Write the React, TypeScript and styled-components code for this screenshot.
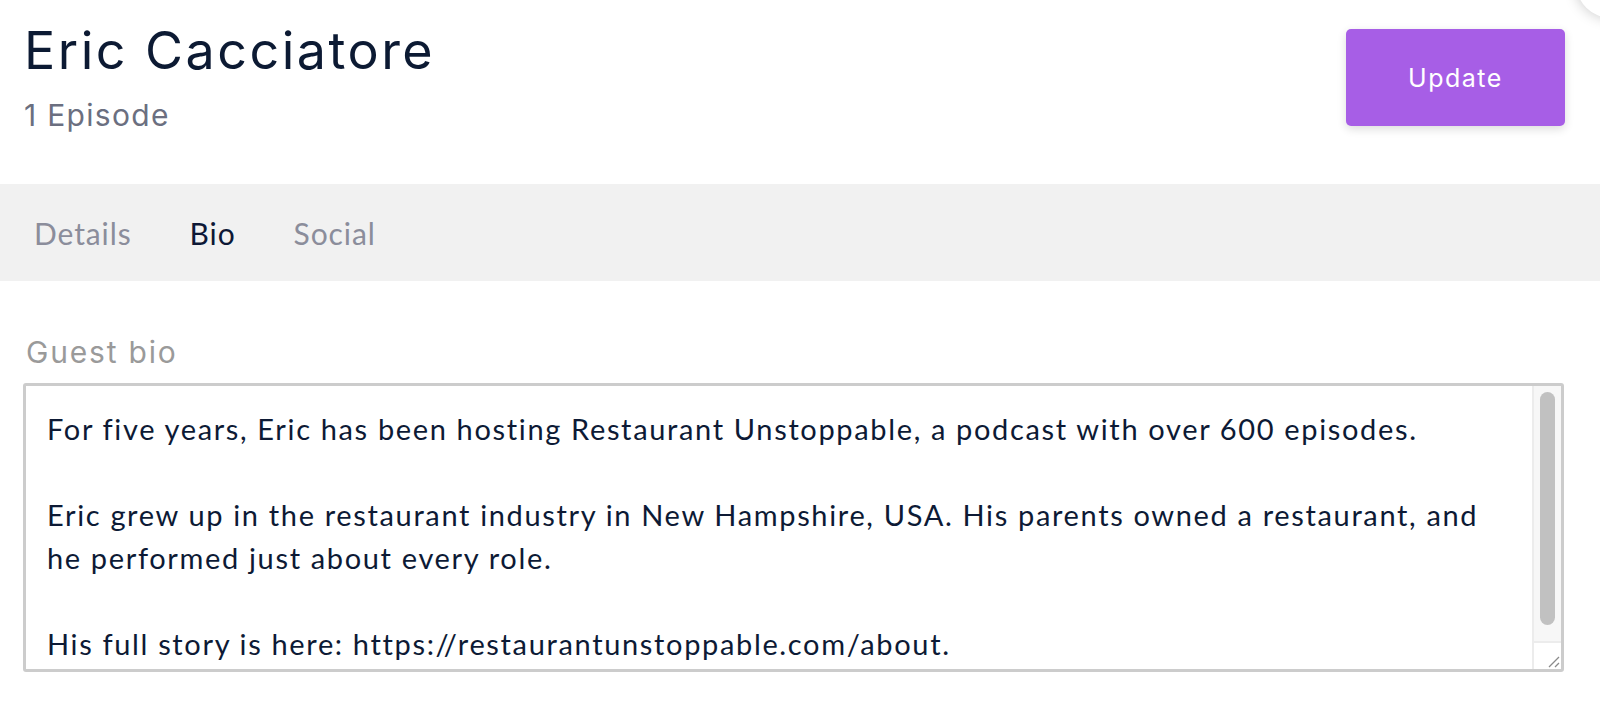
import React, { useState } from 'react';
import styled, { createGlobalStyle } from 'styled-components';

const GlobalStyle = createGlobalStyle`
  html, body {
    margin: 0;
    padding: 0;
    background: #ffffff;
  }
  body {
    font-family: Lato, 'Noto Sans', sans-serif;
    color: #0d1a35;
    overflow: hidden;
  }
  * {
    box-sizing: border-box;
  }
`;

const tabs = ['Details', 'Bio', 'Social'];

const bio = `For five years, Eric has been hosting Restaurant Unstoppable, a podcast with over 600 episodes.

Eric grew up in the restaurant industry in New Hampshire, USA. His parents owned a restaurant, and he performed just about every role.

His full story is here: https://restaurantunstoppable.com/about.`;

export default function App() {
  const [active, setActive] = useState('Bio');
  const [text, setText] = useState(bio);

  return (
    <>
      <GlobalStyle />
      <Page>
        <CornerShadow />
        <Header>
          <div>
            <Title>Eric Cacciatore</Title>
            <Count>1 Episode</Count>
          </div>
          <UpdateButton type='button'>Update</UpdateButton>
        </Header>
        <TabBar>
          {tabs.map((t) => (
            <Tab key={t} $active={t === active} onClick={() => setActive(t)}>
              {t}
            </Tab>
          ))}
        </TabBar>
        <Body>
          <Label htmlFor='guest-bio'>Guest bio</Label>
          <BioBox>
            <BioInput id='guest-bio' value={text} onChange={(e) => setText(e.target.value)} />
            <ScrollRail>
              <ScrollTrack>
                <ScrollThumb />
              </ScrollTrack>
              <Resizer>
                <svg width='14' height='14' viewBox='0 0 14 14'>
                  <path d='M13 3 L3 13 M13 9 L9 13' stroke='#8a8a8a' strokeWidth='1.3' fill='none' />
                </svg>
              </Resizer>
            </ScrollRail>
          </BioBox>
        </Body>
      </Page>
    </>
  );
}

const Page = styled.div`
  position: relative;
  width: 1600px;
  height: 703px;
  overflow: hidden;
  background: #ffffff;
`;

// shadow of an element sitting just outside the top-right corner
const CornerShadow = styled.div`
  position: absolute;
  top: -52px;
  right: -46px;
  width: 70px;
  height: 70px;
  border-radius: 50%;
  background: #ffffff;
  box-shadow: 0 0 14px rgba(0, 0, 0, 0.22);
`;

const Header = styled.header`
  display: flex;
  justify-content: space-between;
  align-items: flex-start;
  height: 184px;
  padding: 21px 35px 0 24px;
`;

const Title = styled.h1`
  margin: 0;
  font-family: Inter, 'Noto Sans', sans-serif;
  font-weight: 400;
  font-size: 52px;
  line-height: 60px;
  letter-spacing: 2.5px;
  color: #0c1a33;
`;

const Count = styled.div`
  margin-top: 16px;
  font-family: Inter, 'Noto Sans', sans-serif;
  font-size: 30px;
  line-height: 36px;
  letter-spacing: 1.3px;
  color: #6b6f80;
`;

const UpdateButton = styled.button`
  margin-top: 8px;
  width: 219px;
  height: 97px;
  border: none;
  border-radius: 5px;
  background: #a75ee6;
  color: #ffffff;
  font-family: Inter, 'Noto Sans', sans-serif;
  font-size: 25px;
  letter-spacing: 1.5px;
  box-shadow: 0 3px 10px rgba(0, 0, 0, 0.14);
  cursor: pointer;
`;

const TabBar = styled.nav`
  display: flex;
  align-items: center;
  gap: 58px;
  height: 97px;
  padding-left: 34px;
  background: #f1f1f1;
`;

const Tab = styled.span<{ $active: boolean }>`
  font-size: 30px;
  letter-spacing: 0.9px;
  color: ${(p) => (p.$active ? '#0d1836' : '#8b8d9b')};
  cursor: pointer;
`;

const Body = styled.section`
  display: flex;
  flex-direction: column;
  padding: 53px 36px 0 23px;
`;

const Label = styled.label`
  display: block;
  padding-left: 3px;
  font-family: Inter, 'Noto Sans', sans-serif;
  font-size: 30px;
  line-height: 36px;
  letter-spacing: 1.8px;
  color: #9a9a9a;
  margin-bottom: 13px;
`;

const BioBox = styled.div`
  display: flex;
  height: 289px;
  border: 3px solid #cccccc;
  border-radius: 3px;
  background: #ffffff;
`;

const BioInput = styled.textarea`
  flex: 1;
  min-width: 0;
  height: 100%;
  padding: 21px 30px 0 21px;
  border: none;
  font-family: Lato, 'Noto Sans', sans-serif;
  font-size: 29px;
  line-height: 43px;
  letter-spacing: 1.65px;
  color: #0d1a35;
  outline: none;
  resize: none;
  overflow: hidden;
`;

const ScrollRail = styled.div`
  display: flex;
  flex-direction: column;
  width: 29px;
  border-left: 2px solid #ececec;
  background: #f7f7f7;
`;

const ScrollTrack = styled.div`
  flex: 1;
  display: flex;
  padding: 6px 6px 16px 6px;
`;

const ScrollThumb = styled.div`
  flex: 1;
  border-radius: 8px;
  background: #c1c1c1;
`;

const Resizer = styled.div`
  display: flex;
  align-items: flex-end;
  justify-content: flex-end;
  height: 28px;
  padding: 0 1px 1px 0;
  border-top: 2px solid #ececec;
  background: #ffffff;
`;
